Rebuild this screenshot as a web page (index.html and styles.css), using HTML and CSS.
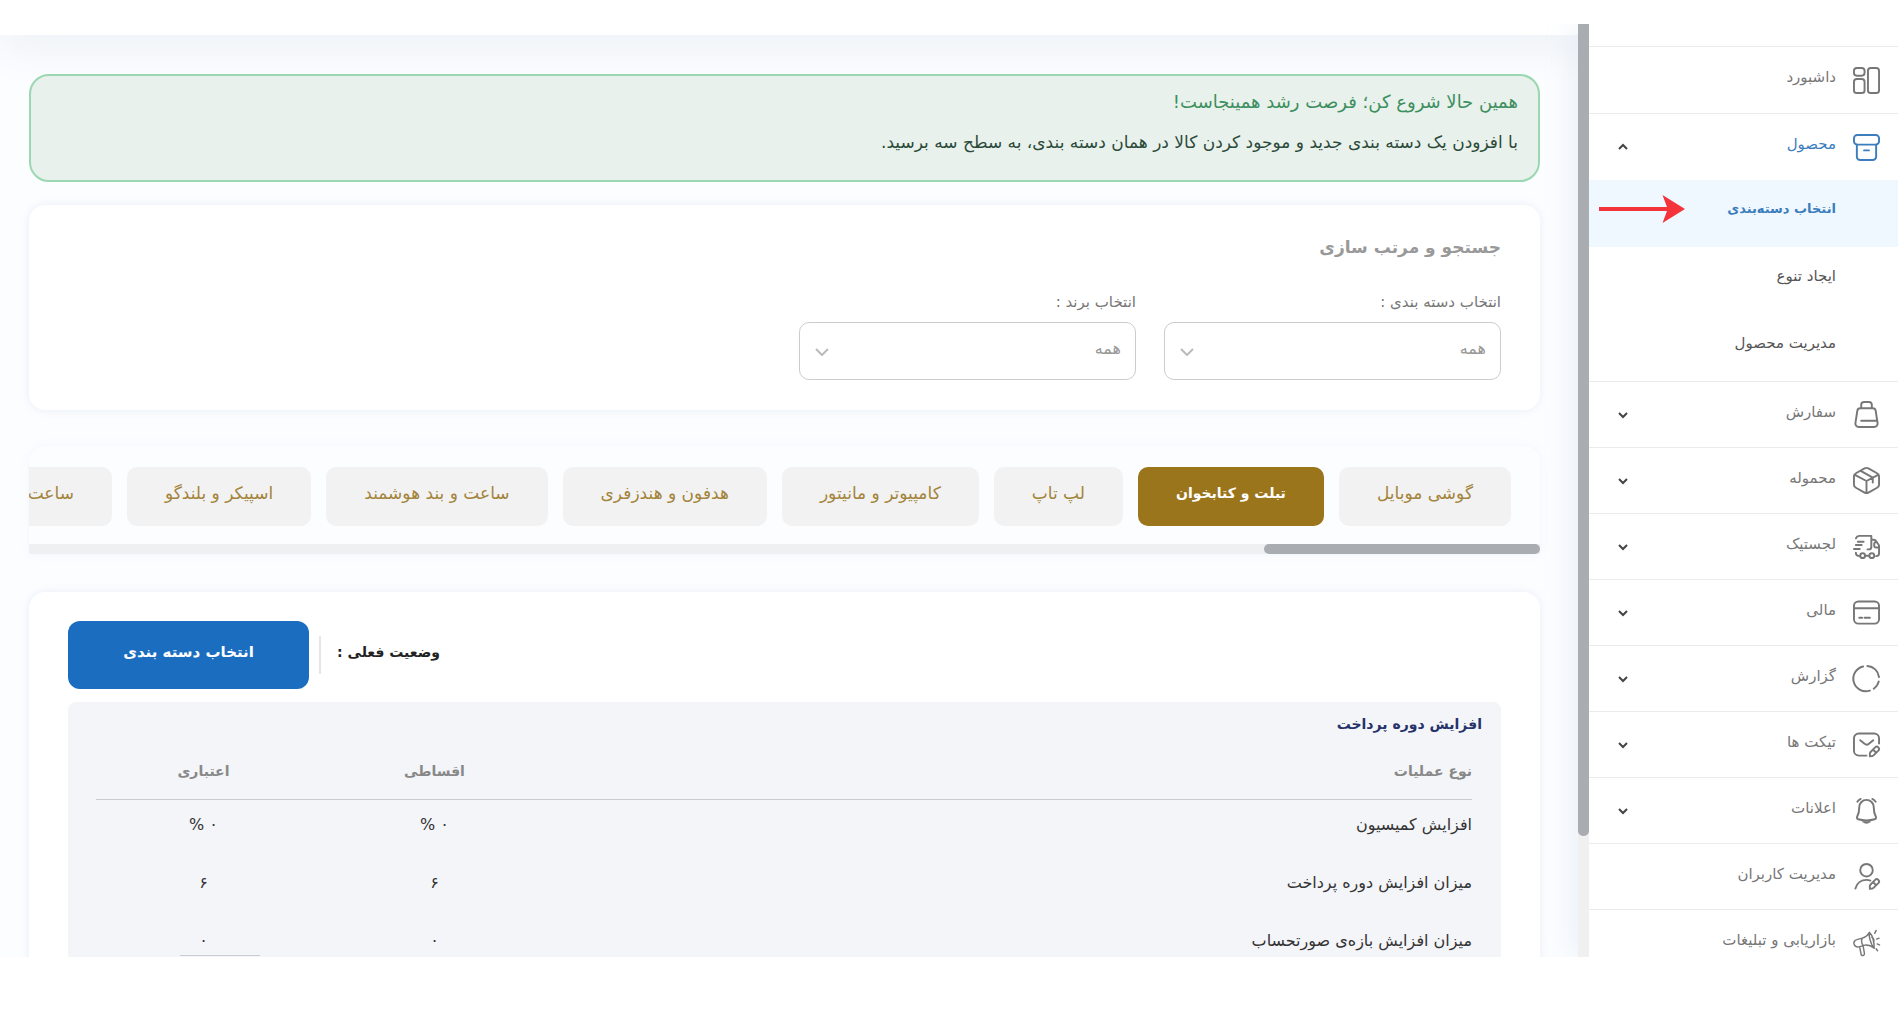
FILE: index.html
```html
<!DOCTYPE html>
<html lang="fa" dir="rtl">
    <head>
        <meta charset="UTF-8" />
        <meta name="viewport" content="width=device-width, initial-scale=1.0" />
        <title>انتخاب دسته‌بندی</title>
        <link rel="stylesheet" href="styles.css">
    </head>
    <body>
        <div class="app">
            <!-- sidebar -->
            <aside class="sidebar">
                <nav>
                    <ul class="menu">
                        <li>
                            <a href="#" class="menu-item tall">
                                <svg class="icon" viewBox="0 0 28 28"><rect x="15.5" y="1" width="11.5" height="26" rx="3"/><rect x="1" y="1" width="11" height="8" rx="3"/><rect x="1" y="12.5" width="11" height="14.5" rx="3"/></svg>
                                <span class="label">داشبورد</span>
                            </a>
                        </li>
                        <li class="open">
                            <button type="button" class="menu-item tall active">
                                <svg class="icon" viewBox="0 0 28 28"><rect x="1" y="1" width="26" height="10" rx="3.5"/><path d="M4 11v12.5a3.5 3.5 0 0 0 3.5 3.5h13a3.5 3.5 0 0 0 3.5-3.5V11M11.5 17h5"/></svg>
                                <span class="label">محصول</span>
                                <svg class="arrow" viewBox="0 0 10 6"><path d="M1 5l4-4 4 4"/></svg>
                            </button>
                            <ul class="submenu">
                                <li class="on">
                                    <a href="#">انتخاب دسته‌بندی</a>
                                    <!-- red pointer -->
                                    <svg class="pointer" viewBox="0 0 86 28"><path d="M0 12h68L63.5 0 86 14 63.5 28 68 16H0z"/></svg>
                                </li>
                                <li><a href="#">ایجاد تنوع</a></li>
                                <li><a href="#">مدیریت محصول</a></li>
                            </ul>
                        </li>
                        <li>
                            <button type="button" class="menu-item">
                                <svg class="icon" viewBox="0 0 28 28"><path d="M7.5 7.5h13a3 3 0 0 1 3 2.6l2 12.9a3.5 3.5 0 0 1-3.5 4H6a3.5 3.5 0 0 1-3.5-4l2-12.900a3 3 0 0 1 3-2.6zM8.500 7.500V4a3 3 0 0 1 3-3h5a3 3 0 0 1 3 3v3.5M8.500 20.500h16"/></svg>
                                <span class="label">سفارش</span>
                                <svg class="arrow" viewBox="0 0 10 6"><path d="M1 1l4 4 4-4"/></svg>
                            </button>
                        </li>
                        <li>
                            <button type="button" class="menu-item">
                                <svg class="icon" viewBox="0 0 28 28"><path d="M12 1.5a4 4 0 0 1 4 0l9 5a3.5 3.5 0 0 1 2 3v9a3.5 3.5 0 0 1-2 3l-9 5a4 4 0 0 1-4 0l-9-5a3.5 3.5 0 0 1-2-3v-9a3.5 3.5 0 0 1 2-3zM1.500 8L14 14.500 26.500 8M14 14.500V27M8 4l12.500 7v5"/></svg>
                                <span class="label">محموله</span>
                                <svg class="arrow" viewBox="0 0 10 6"><path d="M1 1l4 4 4-4"/></svg>
                            </button>
                        </li>
                        <li>
                            <button type="button" class="menu-item">
                                <svg class="icon" viewBox="0 0 28 28"><path d="M3 5.5A4 4 0 0 1 6.500 3H19v11.500a2.500 2.500 0 0 1-2.500 2.500H15M19 7h2.500a3 3 0 0 1 2.600 1.600L27 13v8a3 3 0 0 1-3 3M27 15h-3.500a1.500 1.500 0 0 1-1.500-1.500V11a1.500 1.500 0 0 1 1.500-1.500h1M5 9h6M3 12.500h6M1 16.500h6M3 20.500c0 2 1.500 3.500 4 3.500M13 23.500h3.500"/><circle cx="10" cy="23.5" r="2.5"/><circle cx="19.5" cy="23.5" r="2.5"/></svg>
                                <span class="label">لجستیک</span>
                                <svg class="arrow" viewBox="0 0 10 6"><path d="M1 1l4 4 4-4"/></svg>
                            </button>
                        </li>
                        <li>
                            <button type="button" class="menu-item">
                                <svg class="icon" viewBox="0 0 28 28"><rect x="1" y="2.5" width="26" height="23" rx="4.5"/><path d="M1 9.5h26M6.500 19.500h3M12 19.500h5.500"/></svg>
                                <span class="label">مالی</span>
                                <svg class="arrow" viewBox="0 0 10 6"><path d="M1 1l4 4 4-4"/></svg>
                            </button>
                        </li>
                        <li>
                            <button type="button" class="menu-item">
                                <svg class="icon" viewBox="0 0 28 28"><path d="M15 1A13 13 0 0 1 27 12.500M26.700 17a13 13 0 0 1-5.200 7.600M17.500 26.500A13 13 0 1 1 10.500 1.500"/></svg>
                                <span class="label">گزارش</span>
                                <svg class="arrow" viewBox="0 0 10 6"><path d="M1 1l4 4 4-4"/></svg>
                            </button>
                        </li>
                        <li>
                            <button type="button" class="menu-item">
                                <svg class="icon" viewBox="0 0 28 28"><path d="M14 25.5H6a5 5 0 0 1-5-5v-13a5 5 0 0 1 5-5h16a5 5 0 0 1 5 5V13M7.500 9.500l4.500 3.700a3.500 3.500 0 0 0 4.500 0l4.500-3.700M18 22l5-5a2.300 2.300 0 0 1 3.300 3.300l-5 5c-1 1-3.800 1-3.800 1s-.3-3.300.5-4.300zM21 19.500l2.500 2.500"/></svg>
                                <span class="label">تیکت ها</span>
                                <svg class="arrow" viewBox="0 0 10 6"><path d="M1 1l4 4 4-4"/></svg>
                            </button>
                        </li>
                        <li>
                            <button type="button" class="menu-item">
                                <svg class="icon" viewBox="0 0 28 28"><path d="M14 3a7.5 7.5 0 0 0-7.5 7.500c0 5-.7 7-2.200 10-.6 1.300 0 2.300 1.200 2.600 5.500 1.600 11.500 1.600 17 0 1.200-.3 1.800-1.300 1.200-2.600-1.500-3-2.200-5-2.200-10A7.500 7.500 0 0 0 14 3zM10.500 25.500c2 1.500 5 1.500 7 0M8 2C6.500 2.500 5.500 3.500 4.500 5M20 2c1.500.5 2.500 1.500 3.500 3"/></svg>
                                <span class="label">اعلانات</span>
                                <svg class="arrow" viewBox="0 0 10 6"><path d="M1 1l4 4 4-4"/></svg>
                            </button>
                        </li>
                        <li>
                            <a href="#" class="menu-item">
                                <svg class="icon" viewBox="0 0 28 28"><circle cx="14" cy="7.5" r="6.5"/><path d="M2.5 26.5C4 20.500 9 17.500 14 17.500c1.500 0 3 .3 4 .7M18 22.500l5-5a2.300 2.300 0 0 1 3.300 3.300l-5 5c-1 1-3.800 1-3.800 1s-.3-3.300.5-4.300zM21 20l2.500 2.500"/></svg>
                                <span class="label">مدیریت کاربران</span>
                            </a>
                        </li>
                        <li>
                            <a href="#" class="menu-item">
                                <svg class="icon thin" viewBox="0 0 28 28"><path d="M17 3.5c3 3 5 9.500 5 16.500-3-2.500-6-3.500-9.500-3.300l-6.500 1.800c-2.500.5-4.500-1-5-3s.8-4 3-4.500l5.500-1.500C13 8.500 15.500 6.500 17 3.500zM17 3.500c-1 3 1.500 13 5 16.500M9.500 9.500c-1 2.500-.5 5.500 1 7.500M7 19l1.500 7.500c.2 1 1.500 1.300 2.500.8s1-1.300.8-2.300L10.500 17.500M19.500 8.500c2 .5 3 4 1.700 5.500M22.500 4.500L24 1.500M24.500 10.500l2.500-1M25 15.500l2.500 1M24 20.500l1.500 2"/></svg>
                                <span class="label">بازاریابی و تبلیغات</span>
                            </a>
                        </li>
                    </ul>
                </nav>
            </aside>
            <div class="scroll-y"><div class="thumb"></div></div>

            <!-- content -->
            <main class="main">
                <header class="topbar"></header>
                <div class="content">
                    <section class="alert">
                        <h1>همین حالا شروع کن؛ فرصت رشد همینجاست!</h1>
                        <p>با افزودن یک دسته بندی جدید و موجود کردن کالا در همان دسته بندی، به سطح سه برسید.</p>
                    </section>

                    <section class="card search">
                        <h2>جستجو و مرتب سازی</h2>
                        <div class="fields">
                            <div class="field">
                                <label for="category">انتخاب دسته بندی :</label>
                                <div class="select">
                                    <select id="category"><option>همه</option></select>
                                    <svg viewBox="0 0 14 8"><path d="M1 1l6 6 6-6"/></svg>
                                </div>
                            </div>
                            <div class="field">
                                <label for="brand">انتخاب برند :</label>
                                <div class="select">
                                    <select id="brand"><option>همه</option></select>
                                    <svg viewBox="0 0 14 8"><path d="M1 1l6 6 6-6"/></svg>
                                </div>
                            </div>
                        </div>
                    </section>

                    <section class="tabs-box">
                        <div class="tabs">
                            <button type="button">گوشی موبایل</button>
                            <button type="button" class="on">تبلت و کتابخوان</button>
                            <button type="button">لپ تاپ</button>
                            <button type="button">کامپیوتر و مانیتور</button>
                            <button type="button">هدفون و هندزفری</button>
                            <button type="button">ساعت و بند هوشمند</button>
                            <button type="button">اسپیکر و بلندگو</button>
                            <button type="button">ساعت</button>
                        </div>
                        <div class="scroll-x"><div class="thumb"></div></div>
                    </section>

                    <section class="card status">
                        <div class="status-head">
                            <span class="status-label">وضعیت فعلی :</span>
                            <button type="button" class="btn">انتخاب دسته بندی</button>
                        </div>
                        <div class="panel">
                            <h3>افزایش دوره پرداخت</h3>
                            <table>
                                <thead>
                                    <tr><th class="name">نوع عملیات</th><th class="mid">اقساطی</th><th class="last">اعتباری</th></tr>
                                </thead>
                                <tbody>
                                    <tr><td class="name">افزایش کمیسیون</td><td>۰ %</td><td>۰ %</td></tr>
                                    <tr><td class="name">میزان افزایش دوره پرداخت</td><td>۶</td><td>۶</td></tr>
                                    <tr><td class="name">میزان افزایش بازه‌ی صورتحساب</td><td>۰</td><td class="marked">۰</td></tr>
                                </tbody>
                            </table>
                        </div>
                    </section>
                </div>
            </main>
        </div>
    </body>
</html>
```
FILE: styles.css
```css
* {
    box-sizing: border-box;
}

body {
    margin: 0;
    padding: 24px 0 61px;
    height: 100vh;
    background: #fff;
    font-family: "DejaVu Sans", sans-serif;
    font-size: 14px;
    color: #333;
}

h1, h2, h3, p, ul {
    margin: 0;
    padding: 0;
}

ul {
    list-style: none;
}

a {
    color: inherit;
    text-decoration: none;
}

button, select {
    font-family: inherit;
    border: 0;
    cursor: pointer;
}

.app {
    display: flex;
    height: 100%;
    overflow: hidden;
}

/* sidebar */
.sidebar {
    flex: 0 0 309px;
    padding-top: 22px;
    background: #fff;
    overflow: hidden;
    z-index: 2;
}

.menu > li {
    border-top: 1px solid #e9eced;
}

.menu-item {
    display: flex;
    align-items: center;
    gap: 17px;
    width: 100%;
    height: 65px;
    padding: 0 18px 0 29px;
    background: none;
    color: #777;
    font-size: 15px;
}

.menu-item.tall {
    height: 66px;
}

.menu-item.active {
    color: #3b7dbd;
}

.label {
    padding-bottom: 6px;
}

.icon {
    flex: none;
    width: 27px;
    height: 27px;
    overflow: visible;
    fill: none;
    stroke: currentColor;
    stroke-width: 2;
    stroke-linecap: round;
    stroke-linejoin: round;
}

.icon.thin {
    stroke-width: 1.5;
}

.arrow {
    width: 10px;
    height: 6px;
    margin-right: auto;
    overflow: visible;
    fill: none;
    stroke: #444;
    stroke-width: 2;
}

.submenu li {
    position: relative;
}

.submenu a {
    display: flex;
    align-items: center;
    height: 67px;
    padding: 0 62px 10px 0;
    font-size: 15px;
    color: #555;
}

.submenu .on {
    background: #eff8ff;
}

.submenu .on a {
    color: #3b7dbd;
    font-size: 13px;
    font-weight: bold;
}

.pointer {
    position: absolute;
    top: 15px;
    left: 10px;
    width: 86px;
    height: 28px;
    fill: #f5333a;
}

/* scroll bars */
.scroll-y {
    flex: 0 0 11px;
    background: #f0f0f0;
    box-shadow: 0 0 30px rgba(150, 180, 210, 0.4);
    z-index: 1;
}

.scroll-y .thumb {
    height: 87%;
    background: #a9adb2;
    border-radius: 0 0 5px 5px;
}

.scroll-x {
    height: 10px;
    background: #eff0f2;
}

.scroll-x .thumb {
    width: 276px;
    height: 10px;
    background: #a9adb2;
    border-radius: 5px;
}

/* content */
.main {
    flex: 1;
    min-width: 0;
    background: #fcfdff;
}

.topbar {
    height: 11px;
    background: #fff;
    box-shadow: 0 4px 40px rgba(100, 130, 160, 0.3);
}

.content {
    position: relative;
    padding: 39px 38px 0 29px;
}

.alert {
    height: 108px;
    padding: 12px 20px;
    border: 2px solid #9bd8b2;
    border-radius: 20px;
    background: #e8f1eb;
}

.alert h1 {
    font-size: 18px;
    line-height: 28px;
    font-weight: normal;
    color: #3d8f60;
}

.alert p {
    padding-top: 12px;
    font-size: 17px;
    line-height: 28px;
    color: #2b4a3a;
}

.card {
    background: #fff;
    border-radius: 16px;
    box-shadow: 0 0 10px rgba(150, 175, 205, 0.2);
}

.search {
    margin-top: 23px;
    padding: 26px 39px 30px;
}

.search h2 {
    font-size: 17px;
    line-height: 32px;
    color: #999;
}

.fields {
    display: flex;
    gap: 28px;
    padding-top: 26px;
}

.field {
    width: 337px;
}

.field label {
    display: block;
    padding-bottom: 6px;
    font-size: 15px;
    line-height: 27px;
    color: #777;
}

.select {
    position: relative;
}

.select select {
    display: block;
    width: 100%;
    height: 58px;
    padding: 0 14px 6px 40px;
    border: 1px solid #ccc;
    border-radius: 10px;
    background: #fff;
    color: #999;
    font-size: 16px;
    appearance: none;
}

.select svg {
    position: absolute;
    left: 16px;
    top: 26px;
    width: 14px;
    height: 8px;
    fill: none;
    stroke: #bbb;
    stroke-width: 2;
}

/* category tabs */
.tabs-box {
    margin-top: 36px;
    border-radius: 16px 16px 0 0;
    box-shadow: 0 0 10px rgba(150, 175, 205, 0.1);
}

.tabs {
    display: flex;
    gap: 15px;
    padding: 21px 29px 18px 0;
    overflow: hidden;
}

.tabs button {
    flex: none;
    height: 59px;
    padding: 0 38px 8px;
    border-radius: 10px;
    background: #f2f2f2;
    color: #a3843b;
    font-size: 17px;
}

.tabs .on {
    background: #9b751b;
    color: #fff;
    font-size: 14px;
    font-weight: bold;
}

/* status card */
.status {
    margin-top: 38px;
    padding: 29px 39px 0;
}

.status-head {
    display: flex;
    justify-content: flex-end;
    align-items: center;
}

.status-label {
    padding: 4px 0 10px 16px;
    border-left: 2px solid #e6e6e8;
    line-height: 24px;
    font-weight: bold;
    color: #222;
}

.btn {
    width: 241px;
    height: 68px;
    margin-right: 10px;
    padding-bottom: 8px;
    border-radius: 12px;
    background: #1a6dbf;
    color: #fff;
    font-size: 15px;
    font-weight: bold;
}

.panel {
    margin-top: 13px;
    padding: 8px 29px 40px 28px;
    border-radius: 8px;
    background: #f3f5f9;
}

.panel h3 {
    margin-right: -10px;
    font-size: 14px;
    line-height: 28px;
    color: #26336b;
}

table {
    width: 100%;
    table-layout: fixed;
    border-collapse: collapse;
}

th {
    height: 61px;
    padding: 6px 0 0;
    border-bottom: 1px solid #c9ccd3;
    color: #888;
    font-size: 14px;
}

td {
    height: 58px;
    padding: 0 0 8px;
    text-align: center;
    font-size: 16px;
}

.name {
    text-align: right;
}

.mid {
    width: 247px;
}

.last {
    width: 215px;
}

/* short rule under the last value */
.marked {
    position: relative;
}

.marked::after {
    content: "";
    position: absolute;
    left: 84px;
    bottom: 17px;
    width: 80px;
    border-bottom: 1px solid #c9ccd3;
}
```
